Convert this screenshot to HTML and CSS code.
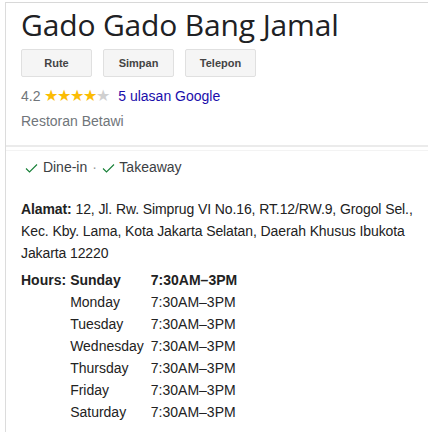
FILE: index.html
```html
<!DOCTYPE html>
<html lang="id">
<head>
    <meta charset="UTF-8">
    <meta name="viewport" content="width=device-width, initial-scale=1.0">
    <title>Gado Gado Bang Jamal</title>
    <link rel="stylesheet" href="styles.css">
</head>
<body>
    <div class="panel">
        <div class="info">
            <h1 class="judul">Gado Gado Bang Jamal</h1>
            <div class="tombol">
                <a class="boton" href="#">Rute</a>
                <a class="boton" href="#">Simpan</a>
                <a class="boton" href="#">Telepon</a>
            </div>
            <div class="rating">
                <span class="nilai">4.2</span>
                <span class="bintang">&#9733;&#9733;&#9733;&#9733;<span class="kosong">&#9733;</span></span>
                <a href="#" class="ulasan">5 ulasan Google</a>
            </div>
            <div class="jenis">Restoran Betawi</div>
        </div>
        <div class="garis"></div>
        <div class="layanan">
            <svg class="cek" viewBox="0 0 13 10" width="13" height="10"><path d="M1 5.5 L4.5 9 L12 1.5" fill="none" stroke="#188038" stroke-width="1.1"/></svg>
            Dine-in <span class="titik">&middot;</span>
            <svg class="cek" viewBox="0 0 13 10" width="13" height="10"><path d="M1 5.5 L4.5 9 L12 1.5" fill="none" stroke="#188038" stroke-width="1.1"/></svg>
            Takeaway
        </div>
        <p class="alamat"><b>Alamat:</b> 12, Jl. Rw. Simprug VI No.16, RT.12/RW.9, Grogol Sel., Kec. Kby. Lama, Kota Jakarta Selatan, Daerah Khusus Ibukota Jakarta 12220</p>
        <table class="jam">
            <tr class="hoy"><th>Hours:</th><td>Sunday</td><td>7:30AM&ndash;3PM</td></tr>
            <tr><th></th><td>Monday</td><td>7:30AM&ndash;3PM</td></tr>
            <tr><th></th><td>Tuesday</td><td>7:30AM&ndash;3PM</td></tr>
            <tr><th></th><td>Wednesday</td><td>7:30AM&ndash;3PM</td></tr>
            <tr><th></th><td>Thursday</td><td>7:30AM&ndash;3PM</td></tr>
            <tr><th></th><td>Friday</td><td>7:30AM&ndash;3PM</td></tr>
            <tr><th></th><td>Saturday</td><td>7:30AM&ndash;3PM</td></tr>
        </table>
    </div>
</body>
</html>
```

FILE: styles.css
```css
html, body {
    overflow: hidden;
}

body {
    margin: 0;
    font-family: "Liberation Sans", Arial, sans-serif;
    font-size: 14px;
    color: #222;
    background: #fff;
}

.panel {
    margin-top: 2px;
    margin-left: 5px;
    border-top: 1px solid #d8d8d8;
    border-left: 1px solid #dcdcdc;
    height: 429px;
}

.info {
    padding: 4px 15px 0 15px;
}

.judul {
    font-family: "Open Sans", sans-serif;
    font-weight: 400;
    font-size: 30px;
    line-height: 36px;
    letter-spacing: -0.15px;
    margin: 0;
    color: #202124;
}

.tombol {
    display: flex;
    gap: 11px;
    margin-top: 6px;
}

.boton {
    width: 69px;
    height: 26px;
    line-height: 26px;
    text-align: center;
    background-color: #f5f5f5;
    border: 1px solid #e0e0e0;
    border-radius: 2px;
    color: #444;
    font-size: 11px;
    font-weight: bold;
    text-decoration: none;
}

.rating {
    margin-top: 8px;
    line-height: 22px;
    color: #70757a;
}

.bintang {
    color: #fbbc04;
    font-size: 16px;
    letter-spacing: -1px;
    margin: 0 5px 0 0;
}

.kosong {
    color: #d0d0d0;
}

.ulasan {
    color: #1a0dab;
    text-decoration: none;
}

.jenis {
    color: #70757a;
    margin-top: 3px;
    line-height: 22px;
}

.garis {
    margin-top: 13px;
    border-top: 2px solid #ebebeb;
    border-bottom: 1px solid #f3f3f3;
    height: 3px;
}

.layanan {
    padding: 5px 15px 0 19px;
    line-height: 22px;
    color: #3c4043;
}

.cek {
    vertical-align: -1px;
    margin-right: 1px;
}

.titik {
    color: #999;
    margin: 0 1px;
}

.alamat {
    margin: 20px 0 0 0;
    padding: 0 0 0 15px;
    line-height: 22px;
    letter-spacing: -0.1px;
}

.jam {
    margin: 5px 0 0 15px;
    border-collapse: collapse;
}

.jam th,
.jam td {
    padding: 0;
    line-height: 22px;
    text-align: left;
    vertical-align: top;
}

.jam th {
    padding-right: 4px;
}

.jam td {
    padding-right: 7px;
}

.hoy td {
    font-weight: bold;
}
```
